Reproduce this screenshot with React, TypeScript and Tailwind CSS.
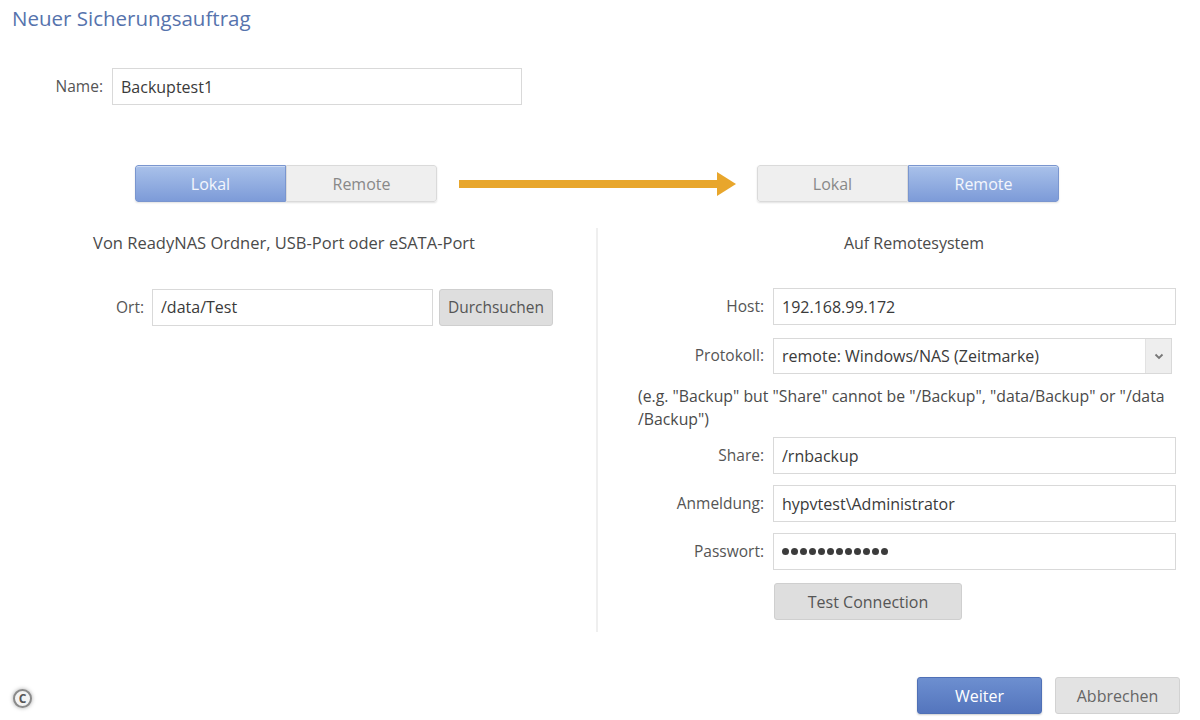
import React from 'react'

const font = { fontFamily: '"Open Sans", "Noto Sans", sans-serif' }

function Toggle({ active }: { active: 'Lokal' | 'Remote' }) {
  const on =
    'bg-gradient-to-b from-[#a9c1ea] to-[#7d9bd8] text-white/90 border border-[#7a96cf] shadow-[inset_0_1px_0_rgba(255,255,255,0.4)]'
  const off = 'bg-[#efefef] text-[#888] border border-[#dadada]'
  return (
    <div className="flex h-[37px] w-[302px] overflow-hidden rounded-[3px] text-[16px] shadow-[0_1px_2px_rgba(0,0,0,0.12)]">
      <div className={`flex flex-1 items-center justify-center rounded-l-[3px] ${active === 'Lokal' ? on : off}`}>Lokal</div>
      <div className={`flex flex-1 items-center justify-center rounded-r-[3px] ${active === 'Remote' ? on : off}`}>Remote</div>
    </div>
  )
}

function Field({ children, className = '' }: { children?: React.ReactNode; className?: string }) {
  return (
    <div
      className={`flex h-[37px] items-center border border-[#d9d9d9] bg-white px-[8px] text-[16px] text-[#3a3a3a] ${className}`}
    >
      {children}
    </div>
  )
}

function Row({ label, children }: { label: string; children: React.ReactNode }) {
  return (
    <div className="flex items-center">
      <div className="w-[135px] pr-[9px] text-right text-[15.5px] text-[#555]">{label}</div>
      <div className="flex-1">{children}</div>
    </div>
  )
}

export default function App() {
  return (
    <div className="relative h-[720px] w-[1200px] overflow-hidden bg-white" style={font}>
      <h1 className="pl-[12px] pt-[4px] text-[20.5px] leading-[28px] text-[#5673ad]">Neuer Sicherungsauftrag</h1>

      <div className="mt-[36px] flex items-center">
        <div className="w-[104px] pr-[1px] text-right text-[15.5px] text-[#555]">Name:</div>
        <Field className="ml-[8px] w-[410px]">Backuptest1</Field>
      </div>

      <div className="mt-[60px] flex items-center">
        <div className="ml-[135px]">
          <Toggle active="Lokal" />
        </div>
        <svg className="ml-[22px]" width="278" height="30" viewBox="0 0 278 30">
          <rect x="0" y="11" width="262" height="8" fill="#e8a62c" />
          <polygon points="258,3 277,15 258,27" fill="#e8a62c" />
        </svg>
        <div className="ml-[20px]">
          <Toggle active="Remote" />
        </div>
      </div>

      <div className="mt-[26px] flex">
        <div className="w-[598px] border-r-[2px] border-[#efefef]">
          <div className="pr-[28px] pt-[3px] text-center text-[16.5px] text-[#4a4a4a]">
            Von ReadyNAS Ordner, USB-Port oder eSATA-Port
          </div>
          <div className="mt-[33px] flex items-center">
            <div className="w-[145px] pr-[1px] text-right text-[15.5px] text-[#555]">Ort:</div>
            <Field className="ml-[7px] w-[281px]">/data/Test</Field>
            <button className="ml-[6px] h-[37px] w-[114px] rounded-[3px] border border-[#cfcfcf] bg-[#dedede] text-[15.5px] text-[#555]">
              Durchsuchen
            </button>
          </div>
        </div>

        <div className="flex flex-1 flex-col pb-[12px] pl-[40px] pr-[24px]">
          <div className="pl-[14px] pt-[3px] text-center text-[16px] text-[#4a4a4a]">Auf Remotesystem</div>
          <div className="mt-[33px] flex flex-col gap-[13px]">
            <Row label="Host:">
              <Field>192.168.99.172</Field>
            </Row>
            <Row label="Protokoll:">
              <div className="mr-[4px] flex h-[36px] items-stretch border border-[#d9d9d9] bg-white text-[16px] text-[#3a3a3a]">
                <div className="flex flex-1 items-center px-[8px]">remote: Windows/NAS (Zeitmarke)</div>
                <div className="flex w-[26px] items-center justify-center border-l border-[#e2e2e2] bg-[#eeeeee]">
                  <svg width="10" height="7" viewBox="0 0 10 7">
                    <path d="M1.5 1.5 L5 5 L8.5 1.5" fill="none" stroke="#777" strokeWidth="1.8" />
                  </svg>
                </div>
              </div>
            </Row>
          </div>
          <div className="mt-[11px] text-[15.8px] leading-[23px] text-[#4a4a4a]">
            (e.g. "Backup" but "Share" cannot be "/Backup", "data/Backup" or "/data
            <br />
            /Backup")
          </div>
          <div className="mt-[6px] flex flex-col gap-[11px]">
            <Row label="Share:">
              <Field>/rnbackup</Field>
            </Row>
            <Row label="Anmeldung:">
              <Field>hypvtest\Administrator</Field>
            </Row>
            <Row label="Passwort:">
              <Field>
                <span className="flex gap-[2px]" aria-label="password">
                  {Array.from({ length: 12 }).map((_, i) => (
                    <span key={i} className="h-[7px] w-[7px] rounded-full bg-[#3c3c3c]" />
                  ))}
                </span>
              </Field>
            </Row>
          </div>
          <div className="mt-[13px] pl-[136px]">
            <button className="h-[37px] w-[188px] rounded-[3px] border border-[#cfcfcf] bg-[#dedede] text-[16px] text-[#555]">
              Test Connection
            </button>
          </div>
        </div>
      </div>

      <div className="mt-[45px] flex items-center pl-[13px] pr-[20px]">
        <span className="mt-[6px] flex h-[19px] w-[19px] items-center justify-center rounded-full border-[2px] border-[#8a8a8a] bg-[#f3f3f3] text-[12px] font-bold leading-none text-[#555] shadow-[0_0_4px_rgba(0,0,0,0.35)]">
          C
        </span>
        <div className="ml-auto flex gap-[13px]">
          <button className="h-[37px] w-[125px] rounded-[3px] border border-[#4f70b6] bg-gradient-to-b from-[#6d8fd0] to-[#5475bd] text-[16px] text-white shadow-[0_1px_2px_rgba(0,0,0,0.2)]">
            Weiter
          </button>
          <button className="h-[37px] w-[125px] rounded-[3px] border border-[#d2d2d2] bg-[#e3e3e3] text-[16px] text-[#666]">
            Abbrechen
          </button>
        </div>
      </div>
    </div>
  )
}
